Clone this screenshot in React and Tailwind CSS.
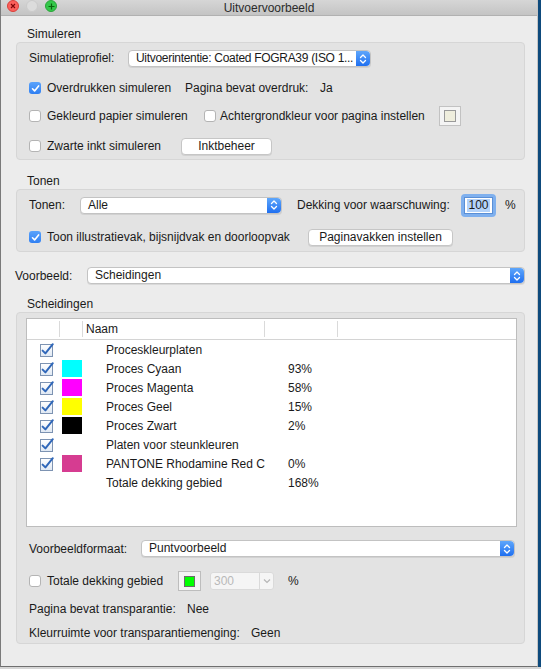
import React from 'react';

const font = { fontFamily: '"Liberation Sans", Arial, sans-serif' };

const Check = ({ checked }) =>
  checked ? (
    <span className="flex h-[12px] w-[12px] shrink-0 items-center justify-center rounded-[3px] bg-gradient-to-b from-[#5aa3fb] to-[#2f7ff2]">
      <svg width="9" height="9" viewBox="0 0 9 9">
        <path d="M1.5 4.8 L3.6 6.9 L7.6 1.9" fill="none" stroke="white" strokeWidth="1.6" strokeLinecap="round" strokeLinejoin="round" />
      </svg>
    </span>
  ) : (
    <span className="block h-[12px] w-[12px] shrink-0 rounded-[3px] border border-[#b4b4b4] bg-white shadow-[inset_0_1px_0_#fff]" />
  );

const ListCheck = () => (
  <svg width="15" height="15" viewBox="0 0 15 15" className="shrink-0">
    <defs>
      <linearGradient id="lc" x1="0" y1="0" x2="0" y2="1">
        <stop offset="0" stopColor="#ffffff" />
        <stop offset="1" stopColor="#dfe8f3" />
      </linearGradient>
    </defs>
    <rect x="0.5" y="2.5" width="12" height="12" fill="url(#lc)" stroke="#7d93b2" />
    <path d="M2.6 8.6 L5.4 11.4 L12.8 2.2" fill="none" stroke="#2f67b9" strokeWidth="2" strokeLinecap="round" strokeLinejoin="round" />
  </svg>
);

const Stepper = () => (
  <span className="flex h-full w-[14px] shrink-0 flex-col items-center justify-center rounded-r-[4px] bg-gradient-to-b from-[#5ea6fb] to-[#1f6ff0]">
    <svg width="8" height="12" viewBox="0 0 8 12">
      <path d="M1.5 4.5 L4 2 L6.5 4.5 M1.5 7.5 L4 10 L6.5 7.5" fill="none" stroke="white" strokeWidth="1.3" strokeLinecap="round" strokeLinejoin="round" />
    </svg>
  </span>
);

const Select = ({ value, className }) => (
  <div className={`flex h-[17px] items-stretch rounded-[4px] border border-[#c3c3c3] bg-white shadow-[0_1px_0_rgba(0,0,0,0.08)] ${className}`}>
    <span className="flex-1 overflow-hidden whitespace-nowrap pl-[7px] leading-[15px] text-[#1a1a1a]">{value}</span>
    <Stepper />
  </div>
);

const Button = ({ children, className }) => (
  <div className={`flex h-[17px] items-center justify-center rounded-[4px] border border-[#c6c6c6] bg-white leading-[15px] shadow-[0_1px_0_rgba(0,0,0,0.08)] ${className}`}>
    {children}
  </div>
);

const rows = [
  { name: 'Proceskleurplaten', check: true },
  { name: 'Proces Cyaan', check: true, color: '#00ffff', pct: '93%' },
  { name: 'Proces Magenta', check: true, color: '#ff00ff', pct: '58%' },
  { name: 'Proces Geel', check: true, color: '#ffff00', pct: '15%' },
  { name: 'Proces Zwart', check: true, color: '#000000', pct: '2%' },
  { name: 'Platen voor steunkleuren', check: true },
  { name: 'PANTONE Rhodamine Red C', check: true, color: '#d63c91', pct: '0%' },
  { name: 'Totale dekking gebied', pct: '168%' },
];

export default function App() {
  return (
    <div className="flex h-[669px] w-[541px] bg-[#d6d6d6] text-[12px] text-[#1a1a1a]" style={font}>
      <div className="flex h-[667px] w-[538px] flex-col border-b border-l border-r border-b-[#6f6f6f] border-l-[#7a7a7a] border-r-[#c4c4c4] bg-[#ececec]">
        {/* title bar */}
        <div className="relative flex h-[16px] shrink-0 items-center justify-center border-b border-[#b1b1b1] bg-gradient-to-b from-[#d6d6d6] to-[#c4c4c4]">
          <div className="absolute left-[6px] top-[0px] flex gap-[7px]">
            <span className="flex h-[12px] w-[12px] items-center justify-center rounded-full border border-[#d9403a] bg-[#fc605c]">
              <svg width="6" height="6" viewBox="0 0 6 6"><path d="M1 1 L5 5 M5 1 L1 5" stroke="#7e0508" strokeWidth="1.1" /></svg>
            </span>
            <span className="h-[12px] w-[12px] rounded-full border border-[#cbcbcb] bg-[#dcdcdc]" />
            <span className="flex h-[12px] w-[12px] items-center justify-center rounded-full border border-[#2aa43a] bg-[#34c84a]">
              <svg width="7" height="7" viewBox="0 0 7 7"><path d="M3.5 0.5 V6.5 M0.5 3.5 H6.5" stroke="#0b650d" strokeWidth="1.2" /></svg>
            </span>
          </div>
          <span className="leading-[14px] text-[#2b2b2b]">Uitvoervoorbeeld</span>
        </div>

        {/* Simuleren */}
        <div className="pl-[26px] pt-[11px] leading-[15px]">Simuleren</div>
        <div className="ml-[15px] flex h-[118px] w-[509px] flex-col rounded-[4px] border border-[#d6d6d6] bg-[#e3e3e3] pt-[7px]">
          <div className="flex h-[17px] items-center">
            <span className="w-[111px] pl-[12px] leading-[15px]">Simulatieprofiel:</span>
            <Select value="Uitvoerintentie: Coated FOGRA39 (ISO 1..." className="w-[243px] tracking-[-0.3px]" />
          </div>
          <div className="mt-[11px] flex h-[20px] items-center pl-[12px]">
            <Check checked />
            <span className="ml-[6px] w-[138px]">Overdrukken simuleren</span>
            <span className="w-[135px]">Pagina bevat overdruk:</span>
            <span>Ja</span>
          </div>
          <div className="mt-[8px] flex h-[20px] items-center pl-[12px]">
            <Check />
            <span className="ml-[6px] w-[157px]">Gekleurd papier simuleren</span>
            <Check />
            <span className="ml-[4px] w-[219px]">Achtergrondkleur voor pagina instellen</span>
            <span className="flex h-[20px] w-[22px] items-center justify-center border border-[#c2c2c2] bg-[#f4f4f4]">
              <span className="h-[12px] w-[12px] border border-[#9a9a9a] bg-[#efeedd]" />
            </span>
          </div>
          <div className="mt-[10px] flex h-[20px] items-center pl-[12px]">
            <Check />
            <span className="ml-[6px] w-[134px]">Zwarte inkt simuleren</span>
            <Button className="w-[91px]">Inktbeheer</Button>
          </div>
        </div>

        {/* Tonen */}
        <div className="pl-[26px] pt-[14px] leading-[15px]">Tonen</div>
        <div className="ml-[15px] flex h-[63px] w-[509px] flex-col rounded-[4px] border border-[#d6d6d6] bg-[#e3e3e3] pt-[5px]">
          <div className="flex h-[20px] items-center">
            <span className="w-[63px] pl-[12px]">Tonen:</span>
            <Select value="Alle" className="w-[202px]" />
            <span className="ml-[15px] w-[164px]">Dekking voor waarschuwing:</span>
            <span className="flex h-[23px] w-[35px] items-center justify-center rounded-[4px] bg-[#7fb0ee] p-[3px]">
              <span className="flex h-full w-full items-center justify-center border border-[#5a8fd6] bg-white">
                <span className="bg-[#b4d3fa] px-[1px] leading-[13px]">100</span>
              </span>
            </span>
            <span className="ml-[9px]">%</span>
          </div>
          <div className="mt-[12px] flex h-[20px] items-center pl-[12px]">
            <Check checked />
            <span className="ml-[6px] w-[261px]">Toon illustratievak, bijsnijdvak en doorloopvak</span>
            <Button className="w-[145px]">Paginavakken instellen</Button>
          </div>
        </div>

        {/* Voorbeeld */}
        <div className="mt-[15px] flex h-[17px] items-center">
          <span className="w-[86px] pl-[14px]">Voorbeeld:</span>
          <Select value="Scheidingen" className="w-[438px]" />
        </div>

        {/* Scheidingen */}
        <div className="pl-[26px] pt-[13px] leading-[15px]">Scheidingen</div>
        <div className="ml-[15px] flex h-[332px] w-[509px] flex-col rounded-[4px] border border-[#d6d6d6] bg-[#e3e3e3] pl-[9px] pt-[5px]">
          <div className="flex h-[209px] w-[491px] flex-col border border-[#bdbdbd] bg-white">
            <div className="flex h-[21px] shrink-0 items-center border-b border-[#d4d4d4]">
              <span className="h-[16px] w-[33px] border-r border-[#dadada]" />
              <span className="h-[16px] w-[23px] border-r border-[#dadada]" />
              <span className="flex h-[16px] w-[182px] items-center border-r border-[#dadada] pl-[3px] leading-[15px]">Naam</span>
              <span className="h-[16px] w-[73px] border-r border-[#dadada]" />
            </div>
            {rows.map((r) => (
              <div key={r.name} className="flex h-[19px] items-center">
                <span className="flex w-[34px] justify-end pr-[6px]">{r.check && <ListCheck />}</span>
                <span className="flex w-[45px] pl-[1px]">
                  {r.color && <span className="h-[17px] w-[20px]" style={{ backgroundColor: r.color }} />}
                </span>
                <span className="w-[182px]">{r.name}</span>
                <span>{r.pct}</span>
              </div>
            ))}
          </div>

          <div className="mt-[13px] flex h-[17px] items-center">
            <span className="w-[115px] pl-[3px]">Voorbeeldformaat:</span>
            <Select value="Puntvoorbeeld" className="w-[374px]" />
          </div>

          <div className="mt-[14px] flex h-[20px] items-center pl-[3px]">
            <Check />
            <span className="ml-[6px] w-[131px]">Totale dekking gebied</span>
            <span className="flex h-[20px] w-[23px] items-center justify-center border border-[#bdbdbd] bg-[#f4f4f4]">
              <span className="h-[11px] w-[11px] border border-[#6b6b6b] bg-[#00ff00]" />
            </span>
            <span className="ml-[9px] flex h-[18px] w-[64px] items-stretch rounded-[3px] border border-[#dadada] bg-[#f5f5f5]">
              <span className="flex flex-1 items-center pl-[3px] text-[#b9b9b9]">300</span>
              <span className="flex w-[14px] items-center justify-center border-l border-[#dadada]">
                <svg width="8" height="6" viewBox="0 0 8 6"><path d="M1 1.5 L4 4.5 L7 1.5" fill="none" stroke="#b5b5b5" strokeWidth="1.2" /></svg>
              </span>
            </span>
            <span className="ml-[14px]">%</span>
          </div>

          <div className="mt-[9px] flex h-[18px] items-center pl-[3px]">
            <span className="w-[158px]">Pagina bevat transparantie:</span>
            <span>Nee</span>
          </div>
          <div className="mt-[6px] flex h-[18px] items-center pl-[3px]">
            <span className="w-[222px]">Kleurruimte voor transparantiemenging:</span>
            <span>Geen</span>
          </div>
        </div>
      </div>
      <div className="h-[667px] w-[3px] bg-[#0e4a7c]" />
    </div>
  );
}
